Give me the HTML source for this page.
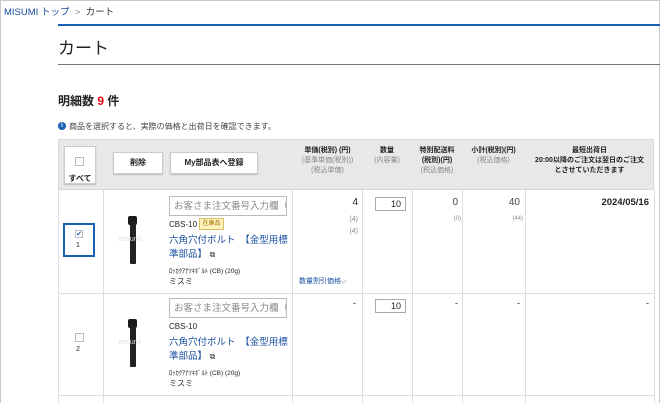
<!DOCTYPE html><html><head><meta charset="utf-8"><style>
*{box-sizing:border-box;margin:0;padding:0}
body{width:660px;height:403px;overflow:hidden;background:#fff;font-family:"Liberation Sans","Noto Sans CJK JP",sans-serif;color:#222;position:relative}
.a{position:absolute}
.frame{left:0;top:0;width:660px;height:403px;border:1px solid #c8c8c8;border-bottom:none}
.hd{background:#e8e8e8}
.t{font-size:8px;line-height:10px;text-align:center;white-space:nowrap}
.g{color:#888;font-size:7px}
.b{font-weight:bold;font-size:7px}
.btn{background:#fff;border:1px solid #ccc;box-shadow:0 1px 1px #bbb;font-size:8px;font-weight:bold;text-align:center}
.vl{width:1px;background:#ddd}
.hl{height:1px;background:#ddd}
.inp{border:1px solid #bbb;background:#fff;font-size:9.5px;color:#888;padding-left:4px;line-height:20px;white-space:nowrap;overflow:hidden}
.lnk{color:#1a4fa0;font-size:9.5px}
.bolt{width:6px;background:#222;border-radius:1px}
.head{width:9px;height:9px;background:#1a1a1a;border-radius:2px}
</style></head><body>
<div class="a frame"></div>
<div class="a" style="left:4px;top:4px;font-size:9.5px;color:#1a4fa0">MISUMI トップ <span style="color:#888">&nbsp;&gt;&nbsp;</span> <span style="color:#333">カート</span></div>
<div class="a" style="left:58px;top:24px;width:602px;height:2px;background:#1a5fb4"></div>
<div class="a" style="left:58px;top:34px;font-size:17px">カート</div>
<div class="a" style="left:58px;top:64px;width:602px;height:1px;background:#777"></div>
<div class="a" style="left:58px;top:92px;font-size:12px;font-weight:bold">明細数<span style="color:#e60012"> 9 </span>件</div>
<div class="a" style="left:58px;top:122px;width:8px;height:8px;border-radius:50%;background:#1a5fb4;color:#fff;font-size:6px;text-align:center;line-height:8px;font-weight:bold">i</div>
<div class="a" style="left:69px;top:121px;font-size:8px;color:#444">商品を選択すると、実際の価格と出荷日を確認できます。</div>
<div class="a hd" style="left:58px;top:139px;width:596px;height:51px;border:1px solid #d8d8d8"></div>
<div class="a btn" style="left:64px;top:146px;width:32px;height:38px;font-size:8px;padding-top:26px">すべて</div>
<div class="a" style="left:75px;top:157px;width:9px;height:9px;border:1px solid #bbb;background:#fff"></div>
<div class="a btn" style="left:113px;top:152px;width:50px;height:22px;line-height:20px">削除</div>
<div class="a btn" style="left:170px;top:152px;width:88px;height:22px;line-height:20px">My部品表へ登録</div>
<div class="a t" style="left:293px;top:146px;width:69px"><div class="b">単価(税別) (円)</div><div class="g">(基準単価(税別))</div><div class="g">(税込単価)</div></div>
<div class="a t" style="left:362px;top:146px;width:50px"><div class="b">数量</div><div class="g">(内容量)</div></div>
<div class="a t" style="left:412px;top:146px;width:50px"><div class="b">特別配送料</div><div class="b">(税別)(円)</div><div class="g">(税込価格)</div></div>
<div class="a t" style="left:462px;top:146px;width:63px"><div class="b">小計(税別)(円)</div><div class="g">(税込価格)</div></div>
<div class="a t" style="left:525px;top:146px;width:129px"><div class="b">最短出荷日</div><div class="b">20:00以降のご注文は翌日のご注文</div><div class="b">とさせていただきます</div></div>
<div class="a vl" style="left:58px;top:190px;height:213px"></div>
<div class="a vl" style="left:103px;top:190px;height:213px"></div>
<div class="a vl" style="left:292px;top:190px;height:213px"></div>
<div class="a vl" style="left:362px;top:190px;height:213px"></div>
<div class="a vl" style="left:412px;top:190px;height:213px"></div>
<div class="a vl" style="left:462px;top:190px;height:213px"></div>
<div class="a vl" style="left:525px;top:190px;height:213px"></div>
<div class="a vl" style="left:654px;top:190px;height:213px"></div>
<div class="a hl" style="left:58px;top:293px;width:597px"></div>
<div class="a hl" style="left:58px;top:395px;width:597px"></div>
<!-- row 1 -->
<div class="a" style="left:63px;top:223px;width:32px;height:34px;border:2px solid #1a5fb4"></div>
<div class="a" style="left:75px;top:230px;width:8px;height:8px;border:1px solid #bbb;color:#1a5fb4;font-size:7px;line-height:7px;text-align:center">✔</div>
<div class="a" style="left:76px;top:242px;font-size:7px">1</div>
<div class="a head" style="left:128px;top:216px"></div>
<div class="a bolt" style="left:129.5px;top:222px;height:42px"></div>
<div class="a" style="left:119px;top:236px;font-size:7px;color:#ddd">misumi</div>
<div class="a inp" style="left:169px;top:196px;width:118px;height:20px">お客さま注文番号入力欄（任</div>
<div class="a" style="left:169px;top:220px;font-size:8px">CBS-10</div>
<div class="a" style="left:199px;top:218px;width:25px;height:12px;background:#fff3c0;border:1px solid #d8c060;font-size:6px;color:#a07000;text-align:center;line-height:10px">在庫品</div>
<div class="a lnk" style="left:169px;top:234px;width:122px;line-height:14px">六角穴付ボルト　【金型用標準部品】 <span style="color:#333;font-size:8px">⧉</span></div>
<div class="a" style="left:169px;top:265px;font-size:6.5px">ﾛｯｶｸｱﾅﾂｷﾎﾞﾙﾄ (CB) (20g)</div>
<div class="a" style="left:169px;top:276px;font-size:8px">ミスミ</div>
<div class="a" style="left:293px;top:197px;width:65px;text-align:right;font-size:10px">4</div>
<div class="a g" style="left:293px;top:216px;width:65px;text-align:right">(4)</div>
<div class="a g" style="left:293px;top:228px;width:65px;text-align:right">(4)</div>
<div class="a" style="left:299px;top:276px;font-size:7px;color:#1a4fa0">数量割引価格⌵</div>
<div class="a" style="left:375px;top:197px;width:31px;height:14px;border:1px solid #aaa;font-size:9px;text-align:right;padding-right:4px;line-height:12px">10</div>
<div class="a" style="left:413px;top:197px;width:45px;text-align:right;font-size:10px;color:#444">0</div>
<div class="a g" style="left:413px;top:216px;width:48px;text-align:right;font-size:6px">(0)</div>
<div class="a" style="left:463px;top:197px;width:57px;text-align:right;font-size:10px;color:#444">40</div>
<div class="a g" style="left:463px;top:216px;width:60px;text-align:right;font-size:6px">(44)</div>
<div class="a" style="left:526px;top:197px;width:123px;text-align:right;font-size:9.5px;font-weight:bold">2024/05/16</div>
<!-- row 2 -->
<div class="a" style="left:75px;top:333px;width:9px;height:9px;border:1px solid #bbb"></div>
<div class="a" style="left:76px;top:346px;font-size:7px">2</div>
<div class="a head" style="left:128px;top:319px"></div>
<div class="a bolt" style="left:129.5px;top:325px;height:42px"></div>
<div class="a" style="left:119px;top:339px;font-size:7px;color:#ddd">misumi</div>
<div class="a inp" style="left:169px;top:298px;width:118px;height:20px">お客さま注文番号入力欄（任</div>
<div class="a" style="left:169px;top:322px;font-size:8px">CBS-10</div>
<div class="a lnk" style="left:169px;top:336px;width:122px;line-height:14px">六角穴付ボルト　【金型用標準部品】 <span style="color:#333;font-size:8px">⧉</span></div>
<div class="a" style="left:169px;top:367px;font-size:6.5px">ﾛｯｶｸｱﾅﾂｷﾎﾞﾙﾄ (CB) (20g)</div>
<div class="a" style="left:169px;top:378px;font-size:8px">ミスミ</div>
<div class="a" style="left:293px;top:298px;width:63px;text-align:right;font-size:9px">-</div>
<div class="a" style="left:375px;top:299px;width:31px;height:14px;border:1px solid #aaa;font-size:9px;text-align:right;padding-right:4px;line-height:12px">10</div>
<div class="a" style="left:413px;top:298px;width:45px;text-align:right;font-size:9px">-</div>
<div class="a" style="left:463px;top:298px;width:57px;text-align:right;font-size:9px">-</div>
<div class="a" style="left:526px;top:298px;width:123px;text-align:right;font-size:9px">-</div>
</body></html>
